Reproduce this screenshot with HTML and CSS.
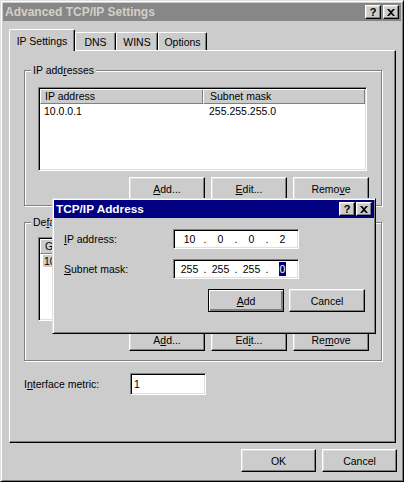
FILE: index.html
```html
<!DOCTYPE html>
<html>
<head>
<meta charset="utf-8">
<link rel="stylesheet" href="styles.css">
</head>
<body>
<div class="window">
  <div class="titlebar inactive">
    <span class="title">Advanced TCP/IP Settings</span>
    <span class="capbtns">
      <span class="capbtn help">?</span>
      <span class="capbtn close"><svg width="8" height="7" viewBox="0 0 8 7"><path d="M0 0h2l2 2 2-2h2L5 3.5 8 7H6L4 5 2 7H0l3-3.5z" fill="#000"/></svg></span>
    </span>
  </div>
  <div class="content">
    <div class="tabs">
      <div class="tab sel">IP Settings</div>
      <div class="tab t-dns">DNS</div>
      <div class="tab t-wins">WINS</div>
      <div class="tab t-opt">Options</div>
    </div>
    <div class="panel">
      <div class="group g-ip">
        <span class="legend">IP add<u>r</u>esses</span>
        <div class="listview">
          <div class="lv-head"><div class="hcell c1">IP address</div><div class="hcell c2">Subnet mask</div></div>
          <div class="lv-row"><div class="cell c1">10.0.0.1</div><div class="cell c2">255.255.255.0</div></div>
        </div>
        <div class="btnrow">
          <div class="btn"><u>A</u>dd...</div>
          <div class="btn"><u>E</u>dit...</div>
          <div class="btn">Remo<u>v</u>e</div>
        </div>
      </div>
      <div class="group g-gw">
        <span class="legend">De<u>f</u>ault gateways:</span>
        <div class="listview">
          <div class="lv-head"><div class="hcell c1">Gateway</div><div class="hcell c2">Metric</div></div>
          <div class="lv-row"><div class="cell c1"><span class="selgray">10.0.0.254</span></div><div class="cell c2">Automatic</div></div>
        </div>
        <div class="btnrow">
          <div class="btn">A<u>d</u>d...</div>
          <div class="btn">Ed<u>i</u>t...</div>
          <div class="btn">Re<u>m</u>ove</div>
        </div>
      </div>
      <div class="metric-row">
        <span class="metric-label">I<u>n</u>terface metric:</span>
        <div class="textbox">1</div>
      </div>
    </div>
    <div class="footer">
      <div class="btn">OK</div>
      <div class="btn">Cancel</div>
    </div>
  </div>

  <div class="dialog">
    <div class="titlebar active">
      <span class="title">TCP/IP Address</span>
      <span class="capbtns">
        <span class="capbtn help">?</span>
        <span class="capbtn close"><svg width="8" height="7" viewBox="0 0 8 7"><path d="M0 0h2l2 2 2-2h2L5 3.5 8 7H6L4 5 2 7H0l3-3.5z" fill="#000"/></svg></span>
      </span>
    </div>
    <div class="dlg-body">
      <div class="field-row">
        <span class="field-label"><u>I</u>P address:</span>
        <div class="ipbox">
          <span class="oct">10</span><span class="dot">.</span><span class="oct">0</span><span class="dot">.</span><span class="oct">0</span><span class="dot">.</span><span class="oct">2</span>
        </div>
      </div>
      <div class="field-row">
        <span class="field-label"><u>S</u>ubnet mask:</span>
        <div class="ipbox">
          <span class="oct">255</span><span class="dot">.</span><span class="oct">255</span><span class="dot">.</span><span class="oct">255</span><span class="dot">.</span><span class="oct"><span class="hl">0</span></span>
        </div>
      </div>
      <div class="dlg-buttons">
        <div class="btn default"><u>A</u>dd</div>
        <div class="btn">Cancel</div>
      </div>
    </div>
  </div>
</div>
</body>
</html>
```

FILE: styles.css
```css
* { box-sizing: border-box; }

body {
  margin: 0;
  background: #cccccc;
  font-family: "Liberation Sans", Arial, sans-serif;
  font-size: 10.5px;
  color: #000;
}

u { text-decoration: underline; text-underline-offset: 1px; }

.window {
  position: relative;
  width: 404px;
  height: 482px;
  background: #cccccc;
  border: 1px solid;
  border-color: #dfdfdf #000 #000 #dfdfdf;
  box-shadow: inset 1px 1px #fff, inset -1px -1px #808080;
  padding: 2px;
}

/* title bars */
.titlebar {
  display: flex;
  align-items: center;
  justify-content: space-between;
  height: 18px;
  padding-left: 2px;
}
.titlebar.inactive { background: #878787; color: #d4d0c8; }
.titlebar.active { background: #000080; color: #fff; }
.titlebar .title {
  font-weight: bold;
  font-size: 12px;
  letter-spacing: 0;
}
.capbtns { display: flex; gap: 2px; margin-right: 2px; }
.capbtn {
  width: 16px;
  height: 14px;
  background: #cccccc;
  border: 1px solid;
  border-color: #fff #000 #000 #fff;
  box-shadow: inset -1px -1px #808080, inset 1px 1px #dfdfdf;
  display: flex;
  align-items: center;
  justify-content: center;
  color: #000;
}
.capbtn.help {
  font-weight: bold;
  font-size: 11px;
  line-height: 1;
  padding-top: 1px;
}

/* content */
.content { padding: 8px 5px 0 6px; }

.tabs {
  display: flex;
  align-items: flex-end;
  height: 21px;
  position: relative;
  z-index: 1;
}
.tab {
  height: 18px;
  background: #cccccc;
  border-top: 1px solid #fff;
  border-left: 1px solid #fff;
  border-right: 1px solid #000;
  border-top-left-radius: 2px;
  border-top-right-radius: 2px;
  box-shadow: inset -1px 0 #808080;
  display: flex;
  align-items: center;
  justify-content: center;
  padding-top: 1px;
}
.tab.sel {
  height: 22px;
  width: 66px;
  margin-bottom: -1px;
  padding-bottom: 1px;
}
.t-dns { width: 41px; }
.t-wins { width: 42px; }
.t-opt { width: 49px; }

.panel {
  width: 387px;
  height: 393px;
  border: 1px solid;
  border-color: #fff #000 #000 #fff;
  box-shadow: inset -1px -1px #808080;
  padding: 19px 0 0 14px;
}

/* group boxes */
.group {
  position: relative;
  width: 358px;
  border: 1px solid #808080;
  box-shadow: inset 1px 1px #fff, 1px 1px #fff;
  padding-left: 13px;
  padding-right: 12px;
}
.g-ip { height: 136px; padding-top: 16px; }
.g-gw { height: 139px; padding-top: 14px; margin-top: 16px; }
.legend {
  position: absolute;
  top: -7px;
  left: 6px;
  background: #cccccc;
  padding: 0 2px;
  line-height: 13px;
}

/* list views */
.listview {
  width: 329px;
  height: 84px;
  background: #fff;
  border: 1px solid;
  border-color: #808080 #fff #fff #808080;
  box-shadow: inset 1px 1px #000, inset -1px -1px #dfdfdf;
  padding: 1px;
}
.lv-head { display: flex; height: 15px; }
.hcell {
  background: #cccccc;
  border-top: 1px solid #fff;
  border-left: 1px solid #fff;
  border-right: 1px solid #808080;
  border-bottom: 1px solid #808080;
  line-height: 12px;
  padding-left: 4px;
  white-space: nowrap;
  overflow: hidden;
}
.hcell.c1 { width: 163px; }
.hcell.c2 { flex: 1; padding-left: 6px; }
.lv-row { display: flex; height: 14px; line-height: 14px; }
.cell { white-space: nowrap; }
.cell.c1 { width: 163px; padding-left: 4px; }
.cell.c2 { padding-left: 6px; }
.selgray { background: #cccccc; padding: 0 1px; margin-left: -1px; }

.btnrow {
  display: flex;
  justify-content: flex-end;
  gap: 6px;
}
.g-ip .btnrow { margin-top: 6px; }
.g-gw .btnrow { margin-top: 7px; }

.btn {
  width: 76px;
  height: 23px;
  background: #cccccc;
  border: 1px solid;
  border-color: #fff #000 #000 #fff;
  box-shadow: inset -1px -1px #808080, inset 1px 1px #dfdfdf;
  display: flex;
  align-items: center;
  justify-content: center;
  padding-top: 1px;
}
.btn.default {
  border: 1px solid #000;
  box-shadow: inset 1px 1px #fff, inset -1px -1px #808080, inset -2px -2px #808080;
}

/* metric */
.metric-row {
  display: flex;
  align-items: center;
  margin-top: 12px;
}
.metric-label { width: 106px; }
.textbox {
  width: 76px;
  height: 22px;
  background: #fff;
  border: 1px solid;
  border-color: #808080 #fff #fff #808080;
  box-shadow: inset 1px 1px #000, inset -1px -1px #dfdfdf;
  padding: 2px 3px;
  line-height: 16px;
}

/* footer */
.footer {
  display: flex;
  justify-content: flex-end;
  gap: 6px;
  margin-top: 6px;
  margin-right: -1px;
}
.footer .btn { width: 75px; }

/* modal dialog */
.dialog {
  position: absolute;
  left: 51px;
  top: 197px;
  width: 324px;
  height: 136px;
  background: #cccccc;
  border: 1px solid;
  border-color: #dfdfdf #000 #000 #dfdfdf;
  box-shadow: inset 1px 1px #fff, inset -1px -1px #808080;
  padding: 1px;
  z-index: 5;
}
.dialog .titlebar { height: 18px; }
.dialog .titlebar .title { font-size: 11.8px; }
.dialog .capbtns { gap: 1px; }

.dlg-body { padding: 11px 9px 0 10px; }
.field-row {
  display: flex;
  align-items: center;
  height: 20px;
  margin-bottom: 10px;
}
.field-label { width: 109px; }
.ipbox {
  width: 126px;
  height: 20px;
  background: #fff;
  border: 1px solid;
  border-color: #808080 #fff #fff #808080;
  box-shadow: inset 1px 1px #000, inset -1px -1px #dfdfdf;
  display: flex;
  align-items: center;
  padding-left: 3px;
}
.oct { width: 25px; text-align: center; }
.dot { width: 6px; text-align: center; }
.hl { background: #000080; color: #fff; padding: 1px 1px; }

.dlg-buttons {
  display: flex;
  justify-content: flex-end;
  gap: 5px;
  margin-top: 9px;
}
```
